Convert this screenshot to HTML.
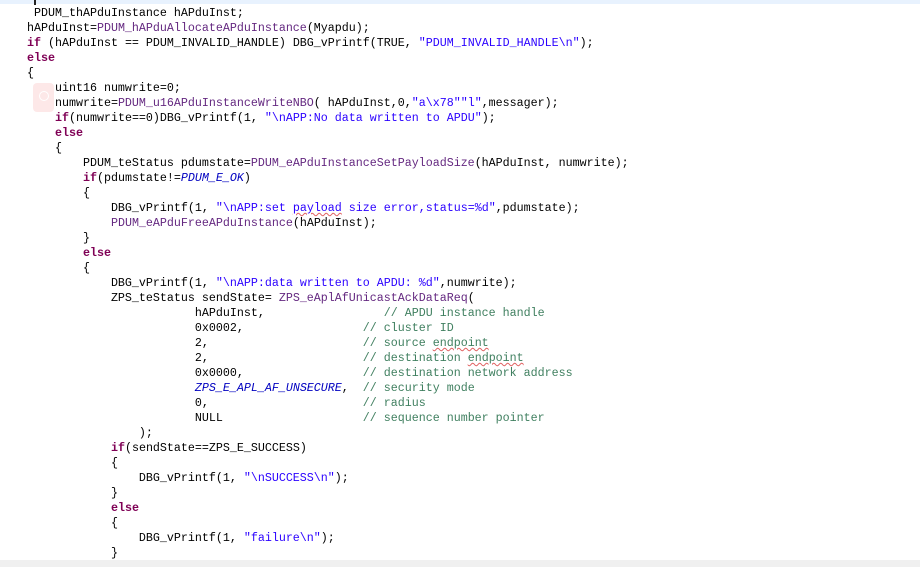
<!DOCTYPE html>
<html><head><meta charset="utf-8"><style>
html,body{margin:0;padding:0;width:920px;height:567px;overflow:hidden;background:#fff}
.top{position:absolute;left:0;top:0;width:920px;height:4px;background:#e8f2fe}
.cur{position:absolute;left:34px;top:0;width:2px;height:5px;background:#222}
pre{position:absolute;left:27px;top:6px;margin:0;font-family:"Liberation Mono",monospace;font-size:11.67px;line-height:15px;color:#000}
.k{color:#7f0055;font-weight:bold}
.f{color:#642880}
.s{color:#2a00ff}
.c{color:#3f7f5f}
.m{color:#0000c0;font-style:italic}
.u{text-decoration:underline wavy #e06060;text-decoration-thickness:1px}
.bot{position:absolute;left:0;top:560px;width:920px;height:7px;background:#f0f0f0}
.srch{position:absolute;left:33px;top:83px;width:21px;height:29px;background:#fde8e8;border-radius:4px}
.srch:after{content:"";position:absolute;left:6px;top:8px;width:8px;height:8px;border:1.5px solid #fff;border-radius:50%}
</style></head><body>
<div class="top"></div><div class="cur"></div>
<div class="srch"></div>
<pre> PDUM_thAPduInstance hAPduInst;
hAPduInst=<span class="f">PDUM_hAPduAllocateAPduInstance</span>(Myapdu);
<span class="k">if</span> (hAPduInst == PDUM_INVALID_HANDLE) DBG_vPrintf(TRUE, <span class="s">"PDUM_INVALID_HANDLE\n"</span>);
<span class="k">else</span>
{
    uint16 numwrite=0;
    numwrite=<span class="f">PDUM_u16APduInstanceWriteNBO</span>( hAPduInst,0,<span class="s">"a\x78""l"</span>,messager);
    <span class="k">if</span>(numwrite==0)DBG_vPrintf(1, <span class="s">"\nAPP:No data written to APDU"</span>);
    <span class="k">else</span>
    {
        PDUM_teStatus pdumstate=<span class="f">PDUM_eAPduInstanceSetPayloadSize</span>(hAPduInst, numwrite);
        <span class="k">if</span>(pdumstate!=<span class="m">PDUM_E_OK</span>)
        {
            DBG_vPrintf(1, <span class="s">"\nAPP:set <span class="u">payload</span> size error,status=%d"</span>,pdumstate);
            <span class="f">PDUM_eAPduFreeAPduInstance</span>(hAPduInst);
        }
        <span class="k">else</span>
        {
            DBG_vPrintf(1, <span class="s">"\nAPP:data written to APDU: %d"</span>,numwrite);
            ZPS_teStatus sendState= <span class="f">ZPS_eAplAfUnicastAckDataReq</span>(
                        hAPduInst,                 <span class="c">// APDU instance handle</span>
                        0x0002,                 <span class="c">// cluster ID</span>
                        2,                      <span class="c">// source <span class="u">endpoint</span></span>
                        2,                      <span class="c">// destination <span class="u">endpoint</span></span>
                        0x0000,                 <span class="c">// destination network address</span>
                        <span class="m">ZPS_E_APL_AF_UNSECURE</span>,  <span class="c">// security mode</span>
                        0,                      <span class="c">// radius</span>
                        NULL                    <span class="c">// sequence number pointer</span>
                );
            <span class="k">if</span>(sendState==ZPS_E_SUCCESS)
            {
                DBG_vPrintf(1, <span class="s">"\nSUCCESS\n"</span>);
            }
            <span class="k">else</span>
            {
                DBG_vPrintf(1, <span class="s">"failure\n"</span>);
            }</pre>
<div class="bot"></div>
</body></html>
